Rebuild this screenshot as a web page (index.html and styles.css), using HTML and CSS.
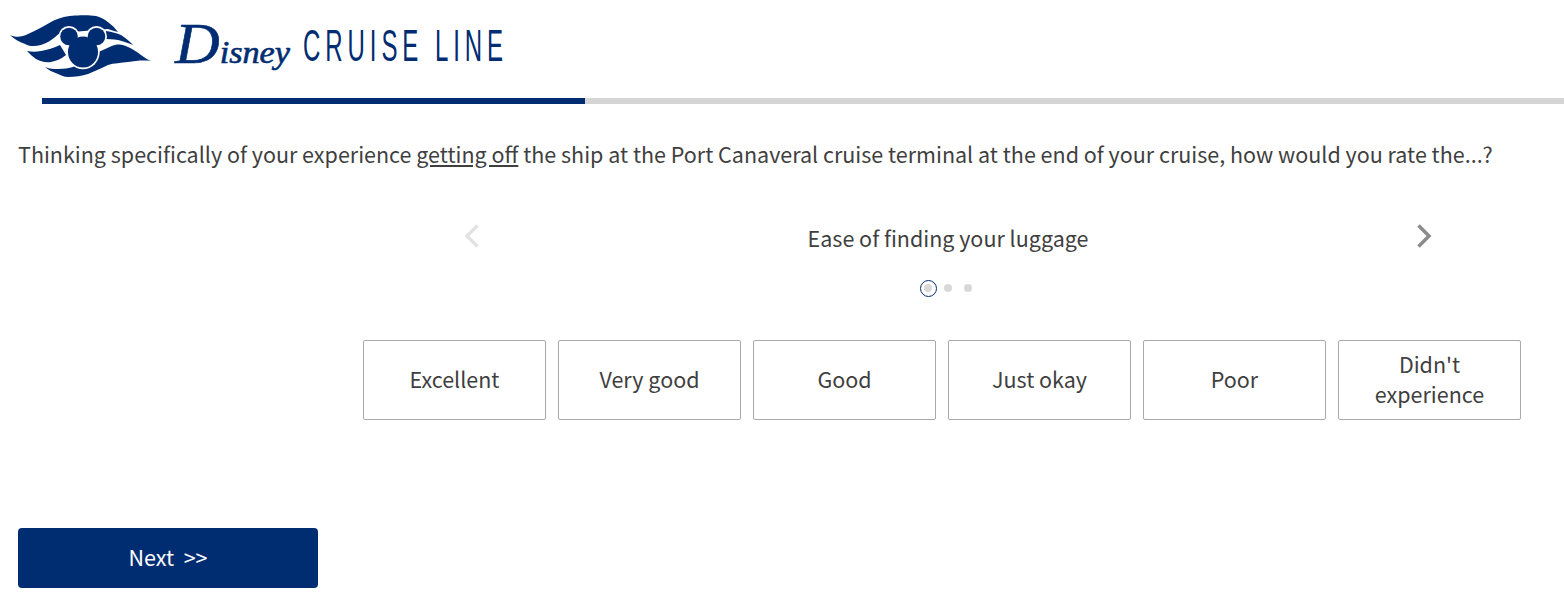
FILE: index.html
```html
<!DOCTYPE html>
<html lang="en">
<head>
<meta charset="utf-8">
<title>Disney Cruise Line survey</title>
<link rel="stylesheet" href="styles.css">
</head>
<body>
<header class="brand">
  <svg class="logo" width="720" height="98" viewBox="0 0 720 98" role="img" aria-label="Disney Cruise Line">
    <g class="logo-ink">
      <path d="M10 35C16 38 22 37 28 34C37 30 44 26 51 22C60 17 68 16 75 15.500C84 15 90 15 96 16C104 18 113 25 118 32C114 31 111 30 108 29L60 33C54 38 48 43 41 45C34 47 28 46 25 44C19 42 14 39 10 35Z"/>
      <path d="M106 31C112 32 117 33 121 35C126 38 130 42 133 45C128 43 123 41 118 40C113 39 108 39 103 39Z"/>
      <path d="M27 51C32 52 36 52 41 51C47 50 54 48 60 45L66 55C61 59 56 61 51 62C45 63 40 61 36 59C33 57 30 54 27 51Z"/>
      <path d="M45 67C50 69 54 69 58 69C64 69 69 68 73 67L98 52C104 50 110 46 115 45C120 44 124 45 128 47C133 49 137 52 141 55C145 58 148 60 151 61C143 60 135 61 128 62C121 63 114 63 108 65C102 68 95 71 88 74C82 76 75 77 68 77C64 77 61 75 58 74C53 72 48 70 45 67Z"/>
    </g>
    <g class="logo-halo">
      <circle cx="69" cy="36.500" r="10.500"/>
      <circle cx="96.500" cy="36.500" r="10.500"/>
      <ellipse cx="83" cy="52" rx="16.700" ry="17.200"/>
    </g>
    <g class="logo-ink">
      <circle cx="69" cy="36.500" r="8.800"/>
      <circle cx="96.500" cy="36.500" r="8.800"/>
      <ellipse cx="83" cy="52" rx="15" ry="15.500"/>
    </g>
    <text class="logo-disney" x="175" y="63" textLength="115" lengthAdjust="spacingAndGlyphs"><tspan class="logo-d">D</tspan>isney</text>
    <text class="logo-line" x="303" y="61" textLength="205" lengthAdjust="spacingAndGlyphs">CRUISE LINE</text>
  </svg>
</header>
<div class="progress"><div class="progress-fill"></div></div>
<main class="content">
  <p class="question">Thinking specifically of your experience <u>getting off</u> the ship at the Port Canaveral cruise terminal at the end of your cruise, how would you rate the...?</p>
  <section class="carousel">
    <div class="carousel-head">
      <svg class="chev" width="18" height="26" viewBox="0 0 18 26" aria-hidden="true"><path class="chev-off" d="M14.500 2.500L4 13L14.500 23.500"/></svg>
      <div class="item-title">Ease of finding your luggage</div>
      <svg class="chev" width="18" height="26" viewBox="0 0 18 26" aria-hidden="true"><path class="chev-on" d="M3.500 2.500L14 13L3.500 23.500"/></svg>
    </div>
    <div class="dots">
      <span class="dot-ring"><span class="dot"></span></span>
      <span class="dot"></span>
      <span class="dot"></span>
    </div>
    <div class="choices">
      <div class="choice">Excellent</div>
      <div class="choice">Very good</div>
      <div class="choice">Good</div>
      <div class="choice">Just okay</div>
      <div class="choice">Poor</div>
      <div class="choice">Didn't experience</div>
    </div>
  </section>
  <button class="next" type="button">Next&nbsp; &gt;&gt;</button>
</main>
</body>
</html>
```
FILE: styles.css
```css
* { box-sizing: border-box; }
html, body { margin: 0; padding: 0; }
body {
  background: #fff;
  color: #3f3f3f;
  font-family: "Noto Sans CJK JP", "Noto Sans", sans-serif;
  font-size: 21.500px;
  overflow: hidden;
}
.brand { height: 98px; }
.logo { display: block; }
.logo-ink { fill: #002d72; }
.logo-halo { fill: #fff; }
.logo-disney {
  fill: #002d72;
  stroke: #002d72;
  stroke-width: 0.600px;
  font-family: "Liberation Serif", serif;
  font-style: italic;
  font-size: 31px;
}
.logo-d { font-size: 56px; }
.logo-line {
  fill: #002d72;
  font-family: "Liberation Sans", sans-serif;
  font-size: 44px;
  letter-spacing: 9px;
}
.progress {
  margin-left: 42px;
  height: 6px;
  background: #d5d5d5;
}
.progress-fill {
  width: 543px;
  height: 100%;
  background: #002d72;
}
.content { padding: 0 18px; }
.question {
  margin: 33px 0 0;
  line-height: 34px;
  white-space: nowrap;
}
.carousel {
  margin-left: 345px;
  margin-right: 25px;
  padding-top: 48px;
}
.carousel-head {
  display: flex;
  align-items: center;
  justify-content: space-between;
  margin-left: 100px;
  margin-right: 88px;
  height: 34px;
}
.chev { flex: none; fill: none; stroke-width: 3.500; }
.chev-off { stroke: #e3e3e3; }
.chev-on { stroke: #8c8c8c; }
.item-title { line-height: 34px; padding-top: 4px; }
.dots {
  display: flex;
  justify-content: center;
  align-items: center;
  gap: 12px;
  margin-top: 26px;
  height: 18px;
  padding-left: 7.500px;
}
.dot {
  display: block;
  width: 8px;
  height: 8px;
  border-radius: 50%;
  background: #d8d8d8;
}
.dot-ring {
  display: flex;
  align-items: center;
  justify-content: center;
  width: 17px;
  height: 17px;
  margin-right: -4.500px;
  border: 1.500px solid #002d72;
  border-radius: 50%;
}
.choices {
  display: flex;
  gap: 12px;
  margin-top: 43px;
}
.choice {
  flex: none;
  width: 183px;
  height: 80px;
  display: flex;
  align-items: center;
  justify-content: center;
  padding: 0 20px 2px;
  text-align: center;
  line-height: 30px;
  border: 1px solid #a9a9a9;
  border-radius: 2px;
}
.next {
  display: block;
  width: 300px;
  height: 60px;
  margin-top: 108px;
  padding: 0 0 3px;
  border: 0;
  border-radius: 4px;
  background: #002d72;
  color: #fff;
  font: inherit;
}
```
